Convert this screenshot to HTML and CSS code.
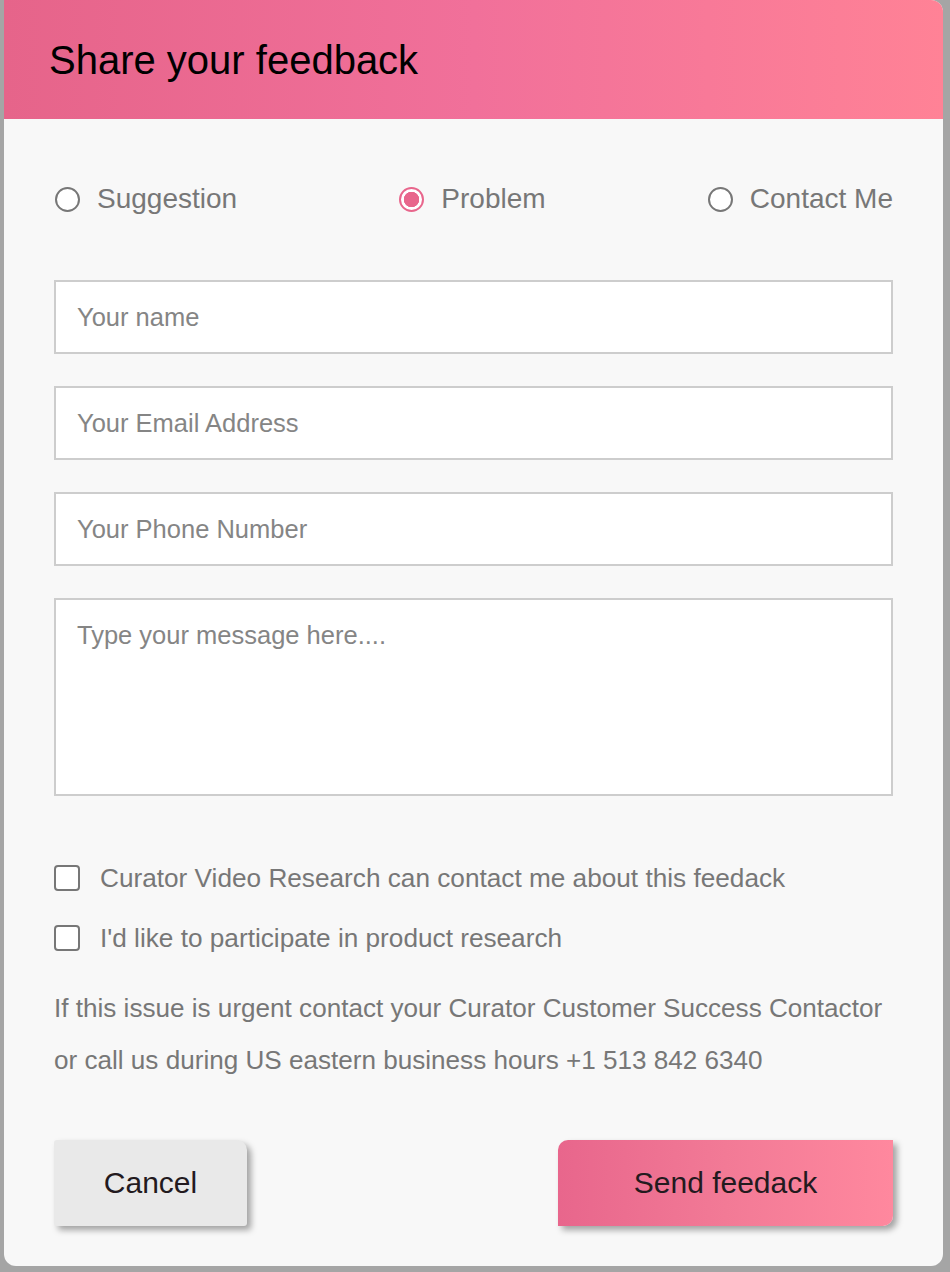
FILE: index.html
```html
<!DOCTYPE html>
<html lang="en">
<head>
<meta charset="utf-8">
<title>Share your feedback</title>
<link rel="stylesheet" href="styles.css">
</head>
<body>
<div class="card">
  <div class="header"><h1 class="title">Share your feedback</h1></div>
  <div class="content">
    <div class="radios">
      <label class="radio-item"><input type="radio" name="kind" class="radio"><span>Suggestion</span></label>
      <label class="radio-item"><input type="radio" name="kind" class="radio" checked><span>Problem</span></label>
      <label class="radio-item"><input type="radio" name="kind" class="radio"><span>Contact Me</span></label>
    </div>
    <div class="fields">
      <input class="field" type="text" placeholder="Your name">
      <input class="field" type="email" placeholder="Your Email Address">
      <input class="field" type="tel" placeholder="Your Phone Number">
      <textarea class="field area" placeholder="Type your message here...."></textarea>
    </div>
    <div class="checks">
      <label class="check-item"><input type="checkbox" class="check"><span>Curator Video Research can contact me about this feedack</span></label>
      <label class="check-item"><input type="checkbox" class="check"><span>I'd like to participate in product research</span></label>
    </div>
    <p class="note">If this issue is urgent contact your Curator Customer Success Contactor or call us during US eastern business hours +1 513 842 6340</p>
    <div class="actions">
      <button class="btn cancel" type="button">Cancel</button>
      <button class="btn send" type="button">Send feedack</button>
    </div>
  </div>
</div>
</body>
</html>
```
FILE: styles.css
```css
html, body {
  margin: 0;
  padding: 0;
  background: #a5a5a5;
}
body {
  font-family: "Liberation Sans", Arial, Helvetica, sans-serif;
  height: 1272px;
  overflow: hidden;
}
.card {
  margin-left: 4px;
  width: 939px;
  height: 1266px;
  background: #f8f8f8;
  border-radius: 0 12px 12px 12px;
  overflow: hidden;
}
.header {
  height: 119px;
  display: flex;
  align-items: center;
  padding-left: 45px;
  background: linear-gradient(90deg, #e6648a 0%, #f1709a 50%, #ff8296 100%);
}
.title {
  margin: 0;
  font-size: 40px;
  font-weight: normal;
  color: #000;
  line-height: 46px;
}
.content {
  padding: 0 50px;
}
.radios {
  margin-top: 55px;
  height: 50px;
  display: flex;
  justify-content: space-between;
  align-items: center;
}
.radio-item {
  display: flex;
  align-items: center;
  gap: 17px;
  font-size: 28px;
  line-height: 50px;
  color: #777;
  padding-left: 1px;
}
.radio {
  -webkit-appearance: none;
  appearance: none;
  margin: 0;
  width: 25px;
  height: 25px;
  box-sizing: border-box;
  border: 2px solid #777;
  border-radius: 50%;
  background: #fff;
}
.radio:checked {
  border-color: #e8668c;
  background: radial-gradient(circle, #e8668c 0 7.5px, #fff 8px);
}
.fields {
  margin-top: 56px;
  display: flex;
  flex-direction: column;
  gap: 32px;
}
.field {
  display: block;
  box-sizing: border-box;
  width: 100%;
  height: 74px;
  margin: 0;
  padding: 0 21px;
  border: 2px solid #cdcdcd;
  border-radius: 0;
  background: #fff;
  font-family: "Liberation Sans", Arial, Helvetica, sans-serif;
  font-size: 25.5px;
  color: #333;
  outline: none;
}
.field::placeholder {
  color: #858585;
}
.area {
  height: 198px;
  padding: 21px 21px;
  resize: none;
  line-height: 29px;
}
.checks {
  margin-top: 62px;
  display: flex;
  flex-direction: column;
  gap: 20px;
}
.check-item {
  display: flex;
  align-items: center;
  gap: 20px;
  height: 40px;
  font-size: 26.2px;
  color: #777;
}
.check {
  -webkit-appearance: none;
  appearance: none;
  margin: 0;
  width: 26px;
  height: 26px;
  box-sizing: border-box;
  border: 2px solid #777;
  border-radius: 4px;
  background: #fff;
}
.note {
  margin: 24px 0 0;
  font-size: 26.1px;
  line-height: 52px;
  color: #777;
}
.actions {
  margin-top: 54px;
  display: flex;
  justify-content: space-between;
}
.btn {
  height: 86px;
  border: none;
  font-family: "Liberation Sans", Arial, Helvetica, sans-serif;
  font-size: 30px;
  color: #231a1e;
  box-shadow: 4px 4px 6px rgba(0, 0, 0, 0.35);
  padding: 0;
}
.cancel {
  width: 193px;
  background: #e9e9e9;
  border-radius: 3px 10px 3px 3px;
}
.send {
  width: 335px;
  background: linear-gradient(90deg, #e8668c 0%, #f27a96 50%, #ff889e 100%);
  border-radius: 10px 0 10px 0;
}
```
